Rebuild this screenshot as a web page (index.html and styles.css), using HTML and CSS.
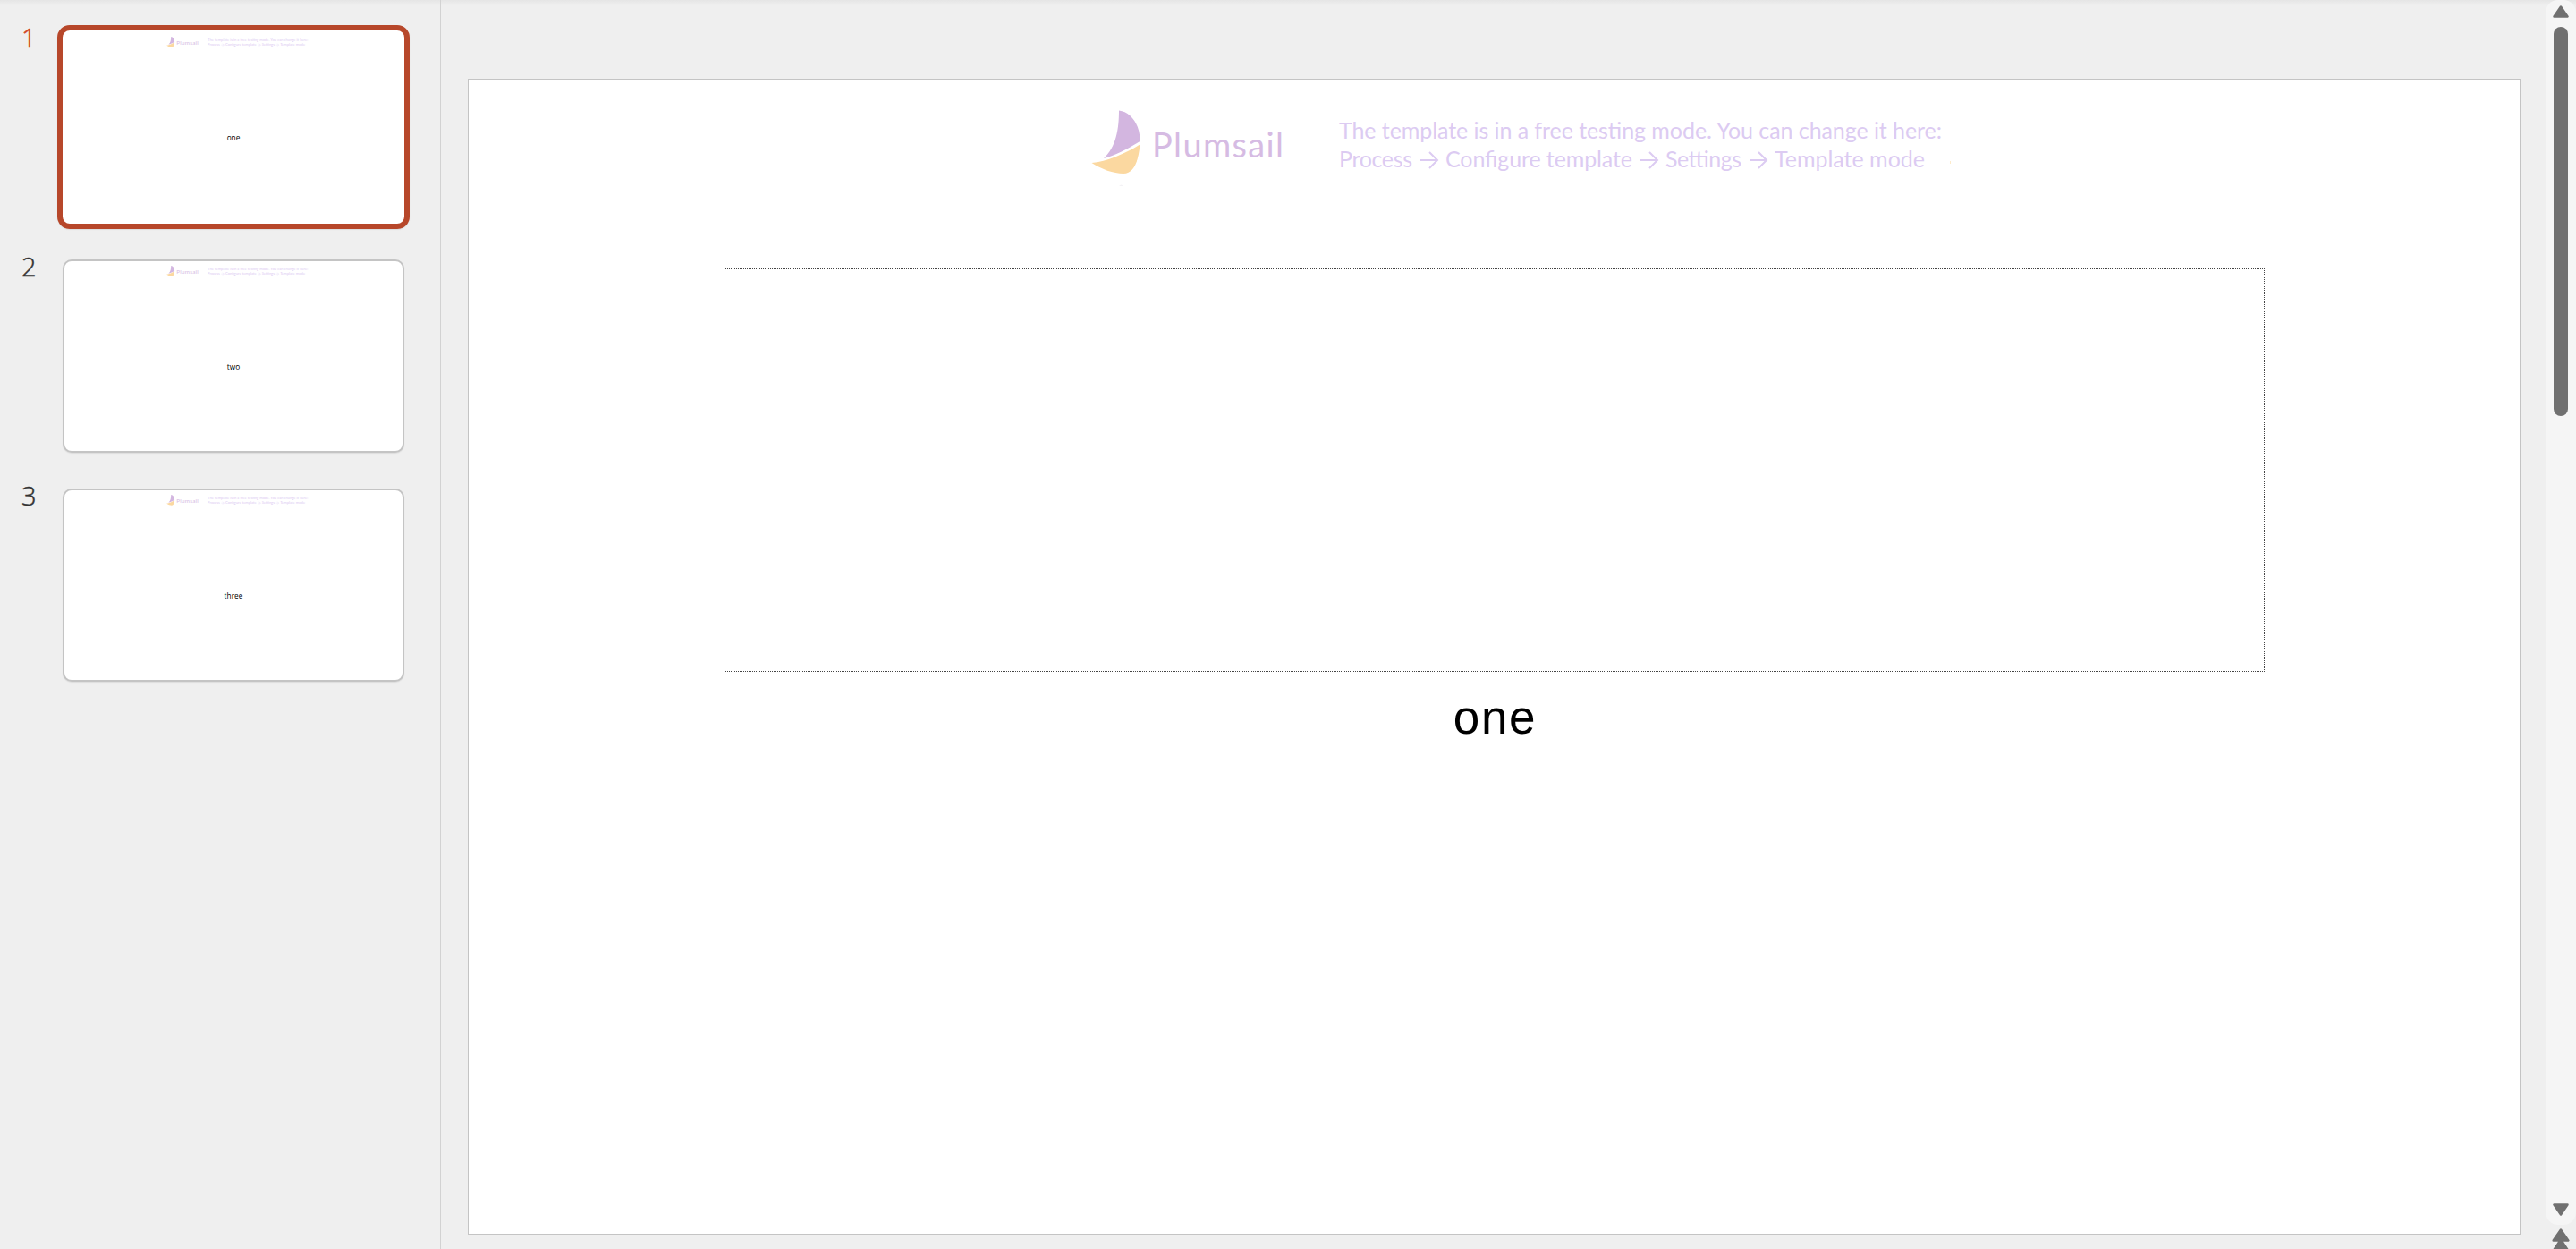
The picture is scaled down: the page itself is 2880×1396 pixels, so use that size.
FILE: index.html
```html
<!DOCTYPE html>
<html lang="en">
<head>
<meta charset="utf-8">
<title>Slides</title>
<link rel="stylesheet" href="styles.css">
</head>
<body>
<div class="app">
  <aside class="panel">
    <div class="entry entry-active"><span class="num">1</span><div class="thumb"><svg class="mini" viewBox="0 0 2295 1292"><use href="#mark"/></svg><p class="caption">one</p></div></div>
    <div class="entry"><span class="num">2</span><div class="thumb"><svg class="mini" viewBox="0 0 2295 1292"><use href="#mark"/></svg><p class="caption">two</p></div></div>
    <div class="entry"><span class="num">3</span><div class="thumb"><svg class="mini" viewBox="0 0 2295 1292"><use href="#mark"/></svg><p class="caption">three</p></div></div>
  </aside>
  <main class="stage">
    <section class="slide">
      <svg class="banner" width="2293" height="122" viewBox="1 1 2293 122">
        <g id="mark">
          <path fill="#d3b6e0" d="M728 35.500C741 37 752 51 751.500 70C740 77 724 86 711 89C725 76 728 56 728 35.500Z"/>
          <path fill="#fbd8a0" d="M751.500 73.500C750 91 745 106 733 106C722 106 708 101 697.500 94C715 93 738 82 751.500 73.500Z"/>
          <text class="brand" x="765" y="87.500" textLength="147">Plumsail</text>
          <g class="note">
            <text x="974" y="66.500" textLength="674">The template is in a free testing mode. You can change it here:</text>
            <text x="974" y="99" textLength="82">Process</text>
            <text x="1093" y="99" textLength="209">Configure template</text>
            <text x="1339" y="99" textLength="85">Settings</text>
            <text x="1461" y="99" textLength="168">Template mode</text>
          </g>
          <path class="arrows" d="M1065 91h19m-9 -9l9 9l-9 9M1311 91h19m-9 -9l9 9l-9 9M1433 91h19m-9 -9l9 9l-9 9"/>
          <path fill="#e9e6ec" d="M728 119.500q2.500-1.500 5 0z"/>
          <path fill="#fdebcb" d="M1657 92h1v3h-1z"/>
        </g>
      </svg>
      <div class="placeholder"></div>
      <h1 class="title">one</h1>
    </section>
  </main>
  <div class="scroll">
    <div class="track">
      <svg width="18" height="14" viewBox="0 0 18 14"><path d="M9 1.500L16.500 12.500H1.500Z"/></svg>
      <div class="handle"></div>
      <svg class="down" width="18" height="14" viewBox="0 0 18 14"><path d="M1.500 1.500H16.500L9 12.500Z"/></svg>
    </div>
    <svg class="prev" width="20" height="28" viewBox="0 0 20 28"><path d="M10 2.500L18.300 14.500H1.700ZM10 13.500L19 27H1Z"/></svg>
  </div>
</div>
</body>
</html>
```
FILE: styles.css
```css
* { box-sizing: border-box; }
body { margin: 0; background: #efefef; font-family: "Open Sans", sans-serif; }
.app {
  display: flex;
  height: 1396px;
  overflow: hidden;
  background: linear-gradient(#e5e5e5, #efefef 6px);
}
.panel {
  width: 493px;
  padding-top: 28px;
  border-right: 1px solid #d2d2d2;
  display: flex;
  flex-direction: column;
  gap: 28px;
}
.entry { display: flex; height: 228px; padding-left: 24px; align-items: center; }
.num {
  width: 46px;
  margin-top: -1px;
  align-self: flex-start;
  font: 300 29px/30px "Open Sans", sans-serif;
  letter-spacing: -1px;
  color: #333;
  -webkit-text-stroke: 0.5px currentColor;
}
.entry-active .num { width: 40px; color: #d24726; }
.thumb {
  width: 382px;
  height: 216px;
  background: #fff;
  border: 2px solid #c4c4c4;
  border-radius: 10px;
  box-shadow: 0 1px 1px #ddd;
  display: grid;
  justify-items: center;
  align-items: start;
}
.entry-active .thumb { width: 394px; height: 228px; border: 6px solid #b7472a; border-radius: 14px; }
.mini { grid-area: 1 / 1; width: 382px; height: 215px; margin: -1px -2px 0; }
.entry-active .mini { margin-top: 1px; }
.caption { grid-area: 1 / 1; margin: 112px 0 0; font: 500 8.300px/12px "Open Sans", sans-serif; color: #000; }
.entry-active .caption { margin-top: 114px; }
.stage { flex: 1; padding: 88px 28px 0 30px; }
.slide { height: 1292px; background: #fff; border: 1px solid #c4c4c4; display: flex; flex-direction: column; align-items: center; }
.banner { display: block; flex: none; }
.brand { font: 38px Lato, sans-serif; fill: #d6bbe3; }
.note { font: 25px Lato, sans-serif; fill: #dccbf2; }
.arrows { fill: none; stroke: #dccbf2; stroke-width: 2; }
.placeholder { width: 1722px; height: 451px; margin-top: 89px; border: 1px dotted #444; }
.title { margin: 21px 0 0; padding-left: 2px; font: 400 53px/60px "Liberation Sans", Arial, sans-serif; color: #000; letter-spacing: 1.700px; }
.scroll { width: 34px; }
.track { height: 1369px; padding: 6px 0 10px; border-radius: 14px; background: #f5f5f5; display: flex; flex-direction: column; align-items: center; }
.handle { width: 16px; height: 435px; margin-top: 10px; border-radius: 8px; background: #707070; }
.down { margin-top: auto; }
.scroll svg { fill: #707070; stroke: #707070; stroke-width: 2.500; stroke-linejoin: round; }
.prev { display: block; margin: 3px auto 0; }
```
